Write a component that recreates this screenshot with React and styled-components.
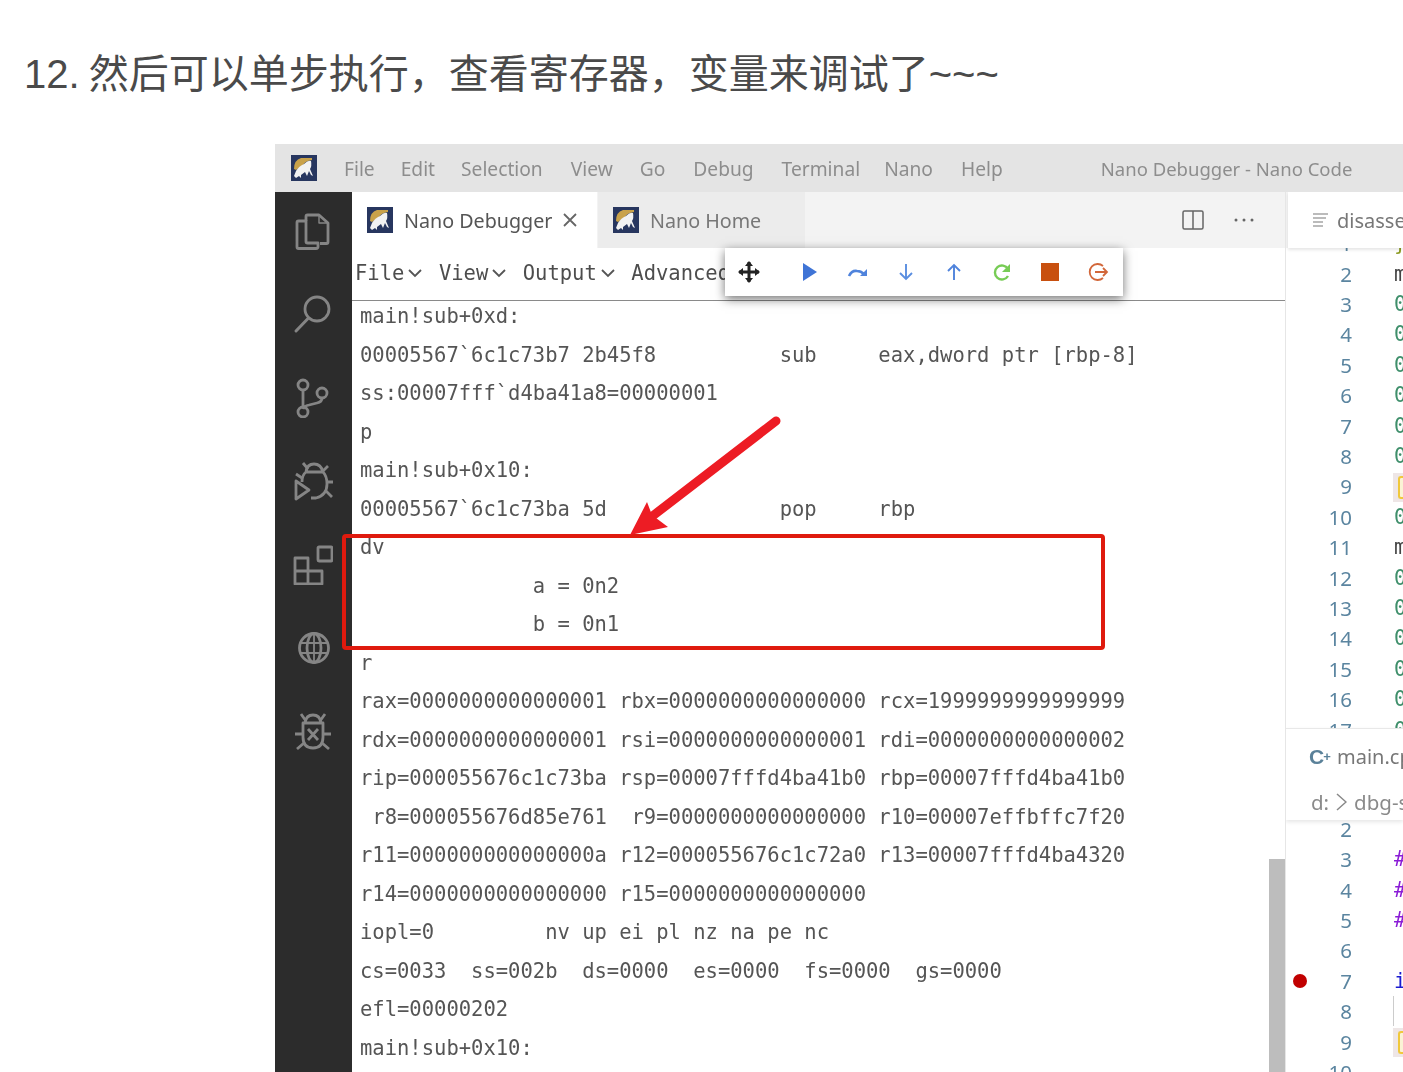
import React from "react";
import styled, { createGlobalStyle } from "styled-components";

const Global = createGlobalStyle`
  html, body { margin: 0; padding: 0; background: #fff; }
  #root { width: 1403px; height: 1072px; overflow: hidden; }
`;

const MONO = `"DejaVu Sans Mono", "Liberation Mono", monospace`;
const UI = `"Noto Sans", "Open Sans", sans-serif`;

const Page = styled.div`
  width: 1403px;
  height: 1072px;
  overflow: hidden;
  background: #fff;
`;
const Heading = styled.h2`
  margin: 0;
  padding: 50px 0 0 24px;
  height: 94px;
  box-sizing: border-box;
  font: 400 40px/48px "Liberation Sans", "Noto Sans CJK SC", sans-serif;
  word-spacing: -2px;
  color: #4a4a4a;
  white-space: nowrap;
`;
const Shot = styled.div`
  position: relative;
  margin: 50px 0 0 275px;
  width: 1128px;
  height: 928px;
  overflow: hidden;
  display: grid;
  grid-template-columns: 77px 933px 118px;
  grid-template-rows: 48px 880px;
  background: #fff;
  filter: blur(0.45px);
`;
const TitleBar = styled.div`
  grid-column: 1 / 4;
  background: #e4e4e4;
  display: flex;
  align-items: center;
  padding-left: 16px;
  font: 400 19.2px ${UI};
  color: #8d8d8d;
  white-space: nowrap;
`;
const MenuItem = styled.span`
  margin-left: ${(p) => p.$left}px;
  font-size: ${(p) => p.$size || 19.2}px;
`;
const ActivityBar = styled.div`
  background: #2c2c2c;
  display: flex;
  flex-direction: column;
  align-items: center;
  gap: 43.4px;
  padding: 19px 1px 0 0;
`;
const ActivityIcon = styled.svg`
  width: 40px;
  height: 40px;
  fill: none;
  stroke: #858585;
  stroke-width: 2.8;
  stroke-linejoin: round;
  flex: none;
`;
const EditorMain = styled.div`
  display: flex;
  flex-direction: column;
  min-width: 0;
  overflow: hidden;
`;
const TabBar = styled.div`
  height: 56px;
  flex: none;
  background: #f3f3f3;
  display: flex;
  align-items: stretch;
`;
const Tab = styled.div`
  width: ${(p) => p.$w}px;
  background: ${(p) => (p.$active ? "#fff" : "#ececec")};
  margin-right: ${(p) => (p.$active ? 1 : 0)}px;
  display: flex;
  align-items: center;
  padding-left: 15px;
  box-sizing: border-box;
  gap: 11px;
  font: 400 19.7px ${UI};
  color: ${(p) => (p.$active ? "#555" : "#777")};
  white-space: nowrap;
`;
const Close = styled.svg`
  width: 16px;
  height: 16px;
  margin-left: -1px;
  stroke: #666;
  stroke-width: 1.8;
`;
const TabTools = styled.div`
  margin-left: auto;
  display: flex;
  align-items: center;
  gap: 27px;
  padding-right: 29px;
`;
const ToolIcon = styled.svg`
  width: 24px;
  height: 24px;
  fill: none;
  stroke: #666;
  stroke-width: 1.5;
`;
const MenuRow = styled.div`
  height: 53px;
  flex: none;
  box-sizing: border-box;
  border-bottom: 1.5px solid #8a8a8a;
  display: flex;
  align-items: center;
  padding: 0 0 2px 3px;
  font: 400 20.5px ${MONO};
  color: #4d4d4d;
  gap: 15.5px;
  white-space: nowrap;
`;
const MenuDrop = styled.span`
  display: inline-flex;
  align-items: center;
  gap: 3px;
`;
const Chevron = styled.svg`
  width: 16px;
  height: 10px;
  fill: none;
  stroke: #555;
  stroke-width: 1.8;
`;
const Output = styled.div`
  margin-top: -4px;
  padding: 0 0 0 8px;
  font: 400 20.5px/38.5px ${MONO};
  color: #555;
  white-space: pre;
`;
const OutLine = styled.div`
  height: 38.5px;
`;
const SidePane = styled.div`
  border-left: 1px solid #e6e6e6;
  display: flex;
  flex-direction: column;
  overflow: hidden;
`;
const SideTabBar = styled.div`
  height: 56px;
  flex: none;
  background: #f3f3f3;
  position: relative;
  z-index: 2;
  display: flex;
`;
const SideTab = styled.div`
  margin-left: 2px;
  flex: 1;
  background: #fff;
  box-shadow: 0 2px 3px rgba(0, 0, 0, 0.1);
  display: flex;
  align-items: center;
  gap: 9px;
  padding-left: 25px;
  font: 400 20px ${UI};
  color: #777;
  white-space: nowrap;
  overflow: hidden;
`;
const SideTabGlyph = styled.svg`
  width: 15px;
  height: 16px;
  flex: none;
  stroke: #bbb;
  stroke-width: 2;
`;
const Peek = styled.div`
  height: ${(p) => p.$h}px;
  flex: none;
  overflow: hidden;
`;
const PeekInner = styled.div`
  margin-top: ${(p) => p.$top}px;
`;
const CodeLine = styled.div`
  height: 30.42px;
  display: grid;
  grid-template-columns: 21px 45px 42px 1fr;
  align-items: center;
  white-space: nowrap;
  overflow: hidden;
`;
const Dot = styled.span`
  width: 14px;
  height: 14px;
  border-radius: 50%;
  background: #c10000;
  justify-self: end;
`;
const Num = styled.span`
  grid-column: 2;
  text-align: right;
  font: 400 20.5px ${UI};
  color: #5b85a0;
`;
const Code = styled.span`
  grid-column: 4;
  font: 400 20.5px/30px ${MONO};
  color: ${(p) => p.$c || "#444"};
`;
const Mark = styled.span`
  grid-column: 4;
  align-self: stretch;
  background: #eee6e6;
  margin-top: 2px;
  padding: 3px 0 3px 5px;
  display: flex;
  margin-left: -1px;
`;
const MarkBox = styled.span`
  flex: 1;
  border: 2px solid #f0c83c;
  border-right: 0;
  border-radius: 3px 0 0 3px;
  background: #fbf3d5;
`;
const Guide = styled.span`
  grid-column: 4;
  align-self: stretch;
  margin-left: -1px;
  border-left: 1px solid #ccc;
`;
const FileHeader = styled.div`
  height: 92px;
  flex: none;
  box-sizing: border-box;
  border-top: 1px solid #e8e8e8;
  box-shadow: 0 2px 4px rgba(0, 0, 0, 0.1);
  position: relative;
  z-index: 1;
  background: #fff;
  display: flex;
  flex-direction: column;
  padding-left: 23px;
  white-space: nowrap;
  overflow: hidden;
`;
const FileTitle = styled.div`
  height: 55px;
  display: flex;
  align-items: center;
  font: 400 20px ${UI};
  color: #777;
`;
const CppGlyph = styled.span`
  display: flex;
  flex: none;
  align-items: center;
  width: 28px;
  font: 700 21px "Liberation Sans", sans-serif;
  color: #5a8199;
`;
const CppPlus = styled.span`
  font-size: 13px;
  margin-left: -1px;
`;
const Crumbs = styled.div`
  display: flex;
  align-items: center;
  gap: 7px;
  margin: 3px 0 0 2px;
  font: 400 20.5px/30px ${UI};
  color: #8a8a8a;
`;
const CrumbSep = styled.svg`
  width: 11px;
  height: 18px;
  flex: none;
  fill: none;
  stroke: #888;
  stroke-width: 1.5;
`;
const FloatBar = styled.div`
  position: absolute;
  left: 450px;
  top: 104px;
  width: 398px;
  height: 48px;
  background: #fff;
  box-shadow: 0 3px 10px rgba(0, 0, 0, 0.55);
  display: flex;
  align-items: center;
  z-index: 3;
`;
const FloatBtn = styled.svg`
  width: 48px;
  height: 24px;
  flex: none;
  overflow: visible;
`;
const FloatSpacer = styled.span`
  width: 13px;
  flex: none;
`;
const Scrollbar = styled.div`
  position: absolute;
  left: 994px;
  top: 715px;
  width: 16px;
  height: 213px;
  background: #bdbdbd;
`;
const RedBox = styled.div`
  position: absolute;
  left: 67px;
  top: 390px;
  width: 763px;
  height: 116px;
  box-sizing: border-box;
  border: 4px solid #df1a0e;
  border-radius: 4px;
  z-index: 4;
`;
const ArrowSvg = styled.svg`
  position: absolute;
  left: 340px;
  top: 265px;
  width: 180px;
  height: 135px;
  z-index: 5;
  overflow: visible;
`;

const Logo = ({ size = 26 }) => (
  <svg width={size} height={size} viewBox="0 0 26 26" style={{ flex: "none" }}>
    <rect width="26" height="26" fill="#27365f" />
    <path d="M3 14 Q3 5 10 3 L21 3 L21 5 Q14 6 12 10 L5 15 Z" fill="#c9a24a" />
    <path
      d="M13 9 Q17 5 20 6 Q21 11 19 14 L22 21 L20 20 L18 16 L16 21 L14 17 L10 20 L10 23 L8 21 L5 23 L3 21 L5 16 Q8 11 13 9 Z"
      fill="#f2f2f2"
    />
  </svg>
);

const disasm = [
  ["m", "#444"],
  ["0", "#3f8f6b"], ["0", "#3f8f6b"], ["0", "#3f8f6b"], ["0", "#3f8f6b"], ["0", "#3f8f6b"], ["0", "#3f8f6b"],
];

const outputLines = [
  "main!sub+0xd:",
  "00005567`6c1c73b7 2b45f8          sub     eax,dword ptr [rbp-8]",
  "ss:00007fff`d4ba41a8=00000001",
  "p",
  "main!sub+0x10:",
  "00005567`6c1c73ba 5d              pop     rbp",
  "dv",
  "              a = 0n2",
  "              b = 0n1",
  "r",
  "rax=0000000000000001 rbx=0000000000000000 rcx=1999999999999999",
  "rdx=0000000000000001 rsi=0000000000000001 rdi=0000000000000002",
  "rip=000055676c1c73ba rsp=00007fffd4ba41b0 rbp=00007fffd4ba41b0",
  " r8=000055676d85e761  r9=0000000000000000 r10=00007effbffc7f20",
  "r11=000000000000000a r12=000055676c1c72a0 r13=00007fffd4ba4320",
  "r14=0000000000000000 r15=0000000000000000",
  "iopl=0         nv up ei pl nz na pe nc",
  "cs=0033  ss=002b  ds=0000  es=0000  fs=0000  gs=0000",
  "efl=00000202",
  "main!sub+0x10:",
];

const Chev = () => (
  <Chevron viewBox="0 0 16 10">
    <path d="M2 2l6 6 6-6" />
  </Chevron>
);

export default function App() {
  return (
    <Page>
      <Global />
      <Heading>12. 然后可以单步执行，查看寄存器，变量来调试了~~~</Heading>
      <Shot>
        <TitleBar>
          <Logo />
          <MenuItem $left={27}>File</MenuItem>
          <MenuItem $left={26}>Edit</MenuItem>
          <MenuItem $left={26}>Selection</MenuItem>
          <MenuItem $left={28}>View</MenuItem>
          <MenuItem $left={27}>Go</MenuItem>
          <MenuItem $left={28}>Debug</MenuItem>
          <MenuItem $left={28}>Terminal</MenuItem>
          <MenuItem $left={24}>Nano</MenuItem>
          <MenuItem $left={28}>Help</MenuItem>
          <MenuItem $left={98} $size={18.5}>Nano Debugger - Nano Code</MenuItem>
        </TitleBar>

        <ActivityBar>
          <ActivityIcon viewBox="0 0 40 40">
            <path d="M13 10V5.500q0-1.500 1.500-1.500H26l9 8v19q0 1.500-1.500 1.500H27" />
            <path d="M26 4v8h9" strokeWidth="1.400" />
            <path d="M13 10H5.500Q4 10 4 11.500V36q0 1.500 1.500 1.500H23q2 0 2-2V32H14.500Q13 32 13 30.500Z" />
          </ActivityIcon>
          <ActivityIcon viewBox="0 0 40 40">
            <circle cx="24" cy="15" r="12" />
            <path d="M15.500 24 3 37" strokeLinecap="round" strokeWidth="3" />
          </ActivityIcon>
          <ActivityIcon viewBox="0 0 40 40">
            <circle cx="10" cy="7" r="5" />
            <circle cx="10" cy="34" r="5" />
            <circle cx="29" cy="15" r="5" />
            <path d="M10 12v17M29 20q0 4-5 5l-8 2q-5 1-6 4" />
          </ActivityIcon>
          <ActivityIcon viewBox="0 0 40 40">
            <path d="M13 11q1-8 8-8t9 8zM13 11q-4 3-4 10M30 11q4 4 4 12q0 11-11 14h-5" />
            <path d="M3 20l13 9-13 9z" />
            <path d="M10 2l5 6M35 5l-6 6M34 21h6M33 30l6 6M9 17l-6-4" />
          </ActivityIcon>
          <ActivityIcon viewBox="0 0 40 40">
            <path d="M2 13h13v26H2zM2 26h27v13H15V13" />
            <rect x="25" y="2" width="14" height="14" rx="1" />
          </ActivityIcon>
          <ActivityIcon viewBox="0 0 40 40">
            <circle cx="21" cy="20" r="14.500" />
            <ellipse cx="21" cy="20" rx="7" ry="14.500" />
            <path d="M7 15h28M7 25h28M21 5.500v29" strokeWidth="1.800" />
          </ActivityIcon>
          <ActivityIcon viewBox="0 0 40 40">
            <path d="M12 12q1-8 8-8t8 8" />
            <path d="M10 12h20v14q0 11-10 11T10 26z" />
            <path d="M15 18l10 11M25 18L15 29" />
            <path d="M8 3l5 7M32 3l-5 7M2 23h8M30 23h8M4 38l7-6M36 38l-7-6" />
          </ActivityIcon>
        </ActivityBar>

        <EditorMain>
          <TabBar>
            <Tab $active $w={245}>
              <Logo />
              <span>Nano Debugger</span>
              <Close viewBox="0 0 16 16">
                <path d="M2 2l12 12M14 2L2 14" />
              </Close>
            </Tab>
            <Tab $w={207}>
              <Logo />
              <span>Nano Home</span>
            </Tab>
            <TabTools>
              <ToolIcon viewBox="0 0 24 24">
                <rect x="2" y="3" width="20" height="18" rx="1.500" />
                <path d="M12 3v18" />
              </ToolIcon>
              <ToolIcon viewBox="0 0 24 24">
                <circle cx="4" cy="12" r="1.500" fill="#666" stroke="none" />
                <circle cx="12" cy="12" r="1.500" fill="#666" stroke="none" />
                <circle cx="20" cy="12" r="1.500" fill="#666" stroke="none" />
              </ToolIcon>
            </TabTools>
          </TabBar>
          <MenuRow>
            <MenuDrop>File<Chev /></MenuDrop>
            <MenuDrop>View<Chev /></MenuDrop>
            <MenuDrop>Output<Chev /></MenuDrop>
            <MenuDrop>Advanced<Chev /></MenuDrop>
          </MenuRow>
          <Output>
            {outputLines.map((line, i) => (
              <OutLine key={i}>{line}</OutLine>
            ))}
          </Output>
        </EditorMain>

        <SidePane>
          <SideTabBar>
            <SideTab>
              <SideTabGlyph viewBox="0 0 15 16">
                <path d="M0 2h15M0 6h13M0 10h10M0 14h10" />
              </SideTabGlyph>
              <span>disassembly</span>
            </SideTab>
          </SideTabBar>
          <Peek $h={480}>
            <PeekInner $top={-20}>
              <CodeLine>
                <Num>1</Num>
                <Code $c="#8a9a20">}</Code>
              </CodeLine>
              {disasm.map(([t, c], i) => (
                <CodeLine key={i}>
                  <Num>{i + 2}</Num>
                  <Code $c={c}>{t}</Code>
                </CodeLine>
              ))}
              <CodeLine>
                <Num>9</Num>
                <Mark><MarkBox /></Mark>
              </CodeLine>
              {[10, 11, 12, 13, 14, 15, 16, 17].map((n) => (
                <CodeLine key={n}>
                  <Num>{n}</Num>
                  <Code $c={n === 11 ? "#444" : "#3f8f6b"}>{n === 11 ? "m" : "0"}</Code>
                </CodeLine>
              ))}
            </PeekInner>
          </Peek>
          <FileHeader>
            <FileTitle>
              <CppGlyph>C<CppPlus>+</CppPlus></CppGlyph>
              <span>main.cpp</span>
            </FileTitle>
            <Crumbs>
              <span>d:</span>
              <CrumbSep viewBox="0 0 11 18"><path d="M1 1l9 8-9 8" /></CrumbSep>
              <span>dbg-sample</span>
            </Crumbs>
          </FileHeader>
          <Peek $h={300}>
            <PeekInner $top={-6.5}>
              <CodeLine><Num>2</Num></CodeLine>
              <CodeLine><Num>3</Num><Code $c="#8a1bd6">#</Code></CodeLine>
              <CodeLine><Num>4</Num><Code $c="#8a1bd6">#</Code></CodeLine>
              <CodeLine><Num>5</Num><Code $c="#8a1bd6">#</Code></CodeLine>
              <CodeLine><Num>6</Num></CodeLine>
              <CodeLine><Dot /><Num>7</Num><Code $c="#1a1ad0">i</Code></CodeLine>
              <CodeLine><Num>8</Num><Guide /></CodeLine>
              <CodeLine><Num>9</Num><Mark><MarkBox /></Mark></CodeLine>
              <CodeLine><Num>10</Num></CodeLine>
            </PeekInner>
          </Peek>
        </SidePane>

        <FloatBar>
          <FloatBtn viewBox="-24 -12 48 24">
            <path d="M-10 0h20M0-10V10" stroke="#222" strokeWidth="3" />
            <path d="M0-11l-4 5h8zM0 11l-4-5h8zM-11 0l5-4v8zM11 0l-5-4v8z" fill="#222" />
          </FloatBtn>
          <FloatSpacer />
          <FloatBtn viewBox="-24 -12 48 24">
            <path d="M-7-9L7 0-7 9z" fill="#3f74d6" />
          </FloatBtn>
          <FloatBtn viewBox="-24 -12 48 24">
            <path d="M-9 4q3-6 8-5q4 0 7 3" fill="none" stroke="#4f83dc" strokeWidth="2.600" />
            <path d="M9 4V-3L2 4z" fill="#4f83dc" />
          </FloatBtn>
          <FloatBtn viewBox="-24 -12 48 24">
            <path d="M0-8V7M-6 1l6 6 6-6" fill="none" stroke="#5a8ee0" strokeWidth="1.900" />
          </FloatBtn>
          <FloatBtn viewBox="-24 -12 48 24">
            <path d="M0 8V-7M-6-1l6-6 6 6" fill="none" stroke="#4f83dc" strokeWidth="1.900" />
          </FloatBtn>
          <FloatBtn viewBox="-24 -12 48 24">
            <path d="M6-3A7 7 0 1 0 6 4" fill="none" stroke="#77cc55" strokeWidth="2.400" />
            <path d="M8-8V0H0z" fill="#77cc55" />
          </FloatBtn>
          <FloatBtn viewBox="-24 -12 48 24">
            <rect x="-9" y="-9" width="18" height="18" fill="#c8500f" />
          </FloatBtn>
          <FloatBtn viewBox="-24 -12 48 24">
            <path d="M5-6A8 8 0 1 0 5 6" fill="none" stroke="#d2673a" strokeWidth="1.800" />
            <path d="M-3 0H9M5-4l4 4-4 4" fill="none" stroke="#d2673a" strokeWidth="1.800" />
          </FloatBtn>
        </FloatBar>

        <Scrollbar />
        <RedBox />
        <ArrowSvg viewBox="0 0 180 135">
          <path d="M161 12 L35 109" stroke="#ed1c24" strokeWidth="9" strokeLinecap="round" fill="none" />
          <path d="M15 126 L32 93 L37 106 L53 118 Z" fill="#ed1c24" />
        </ArrowSvg>
      </Shot>
    </Page>
  );
}
